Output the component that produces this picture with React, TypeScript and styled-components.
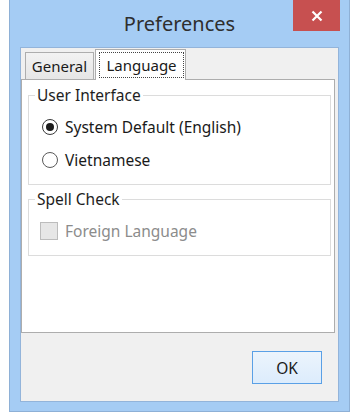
import styled, { createGlobalStyle } from 'styled-components';

const GlobalStyle = createGlobalStyle`
  html, body {
    margin: 0;
    padding: 0;
    background: #ffffff;
  }
  body {
    font-family: "Noto Sans", "Open Sans", sans-serif;
    color: #1a1a1a;
  }
`;

const Window = styled.div`
  box-sizing: border-box;
  margin-left: 9px;
  width: 341px;
  height: 412px;
  background: #a5ccf4;
  border: 1px solid #8eb0d6;
  border-top: none;
  display: flex;
  flex-direction: column;
  padding: 0 10px 9px 10px;
`;

const TitleBar = styled.div`
  height: 47px;
  margin: 0 -10px;
  display: grid;
  grid-template-columns: 1fr auto 1fr;
  align-items: start;
`;

const Title = styled.div`
  grid-column: 2;
  font-size: 20px;
  line-height: 26px;
  padding-top: 11px;
  color: #2e2e2e;
`;

const CloseButton = styled.div`
  grid-column: 3;
  justify-self: end;
  margin-right: 9px;
  width: 47px;
  height: 31px;
  background: #c75050;
  display: flex;
  align-items: center;
  justify-content: center;
`;

const Client = styled.div`
  box-sizing: border-box;
  height: 355px;
  border: 1px solid #93b4da;
  background: #f0f0f0;
  display: flex;
  flex-direction: column;
  padding: 1px 3px 0 0;
`;

const TabStrip = styled.div`
  height: 30px;
  display: flex;
  align-items: flex-end;
  gap: 1px;
  padding-left: 4px;
`;

const Tab = styled.div<{ $active?: boolean }>`
  box-sizing: border-box;
  display: flex;
  align-items: stretch;
  font-size: 15px;
  border: 1px solid #adadad;
  border-bottom: none;
  position: relative;
  z-index: ${(p) => (p.$active ? 1 : 0)};
  height: ${(p) => (p.$active ? '31px' : '27px')};
  margin-bottom: ${(p) => (p.$active ? '-1px' : '0')};
  width: ${(p) => (p.$active ? '91px' : '69px')};
  background: ${(p) =>
    p.$active ? '#ffffff' : 'linear-gradient(#f2f2f2, #e6e6e6)'};
  justify-content: center;
`;

const TabLabel = styled.span<{ $focused?: boolean }>`
  flex: 1;
  display: flex;
  align-items: center;
  justify-content: center;
  margin: ${(p) => (p.$focused ? '2px 1px 2px 3px' : '0')};
  border: ${(p) => (p.$focused ? '1px dotted #444' : 'none')};
`;

const Panel = styled.div`
  box-sizing: border-box;
  flex: 0 0 254px;
  background: #ffffff;
  border: 1px solid #adadad;
  padding: 0 3px 0 6px;
  display: flex;
  flex-direction: column;
`;

const Group = styled.fieldset<{ $gap: number }>`
  margin: ${(p) => p.$gap}px 0 0 0;
  padding: 14px 0 14px 13px;
  border: 1px solid #dcdcdc;
  display: flex;
  flex-direction: column;
  gap: 13px;
  min-width: 0;
`;

const Legend = styled.legend`
  margin-left: -7px;
  padding: 0 2px;
  font-size: 15.5px;
  line-height: 16px;
  color: #1e1e1e;
`;

const Option = styled.label<{ $disabled?: boolean }>`
  display: flex;
  align-items: center;
  gap: 7px;
  height: 20px;
  font-size: 15.5px;
  color: ${(p) => (p.$disabled ? '#8c8c8c' : '#1a1a1a')};
`;

const Radio = styled.span<{ $checked?: boolean }>`
  box-sizing: border-box;
  width: 16px;
  height: 16px;
  border-radius: 50%;
  border: 1px solid ${(p) => (p.$checked ? '#3a3a3a' : '#5a5a5a')};
  background: #ffffff;
  display: flex;
  align-items: center;
  justify-content: center;

  &::after {
    content: '';
    display: ${(p) => (p.$checked ? 'block' : 'none')};
    width: 8px;
    height: 8px;
    border-radius: 50%;
    background: #1b1b1b;
  }
`;

const CheckBox = styled.span`
  box-sizing: border-box;
  width: 18px;
  height: 18px;
  margin-left: -2px;
  border: 1px solid #bcbcbc;
  background: #e6e6e6;
`;

const Footer = styled.div`
  flex: 1;
  display: flex;
  justify-content: flex-end;
  align-items: flex-start;
  padding: 18px 13px 0 0;
`;

const Button = styled.button`
  box-sizing: border-box;
  width: 70px;
  height: 33px;
  border: 1px solid #5aa0e6;
  background: linear-gradient(#ecf4fc, #dcecfc);
  font-family: "Noto Sans", "Open Sans", sans-serif;
  font-size: 15.5px;
  color: #1a1a1a;
  padding: 0;
`;

const App = () => {
  return (
    <>
      <GlobalStyle />
      <Window>
        <TitleBar>
          <Title>Preferences</Title>
          <CloseButton>
            <svg width="12" height="12" viewBox="0 0 12 12">
              <path
                d="M1.5 1.5 L10.5 10.5 M10.5 1.5 L1.5 10.5"
                stroke="#ffffff"
                strokeWidth="2.2"
              />
            </svg>
          </CloseButton>
        </TitleBar>
        <Client>
          <TabStrip>
            <Tab>
              <TabLabel>General</TabLabel>
            </Tab>
            <Tab $active>
              <TabLabel $focused>Language</TabLabel>
            </Tab>
          </TabStrip>
          <Panel>
            <Group $gap={7}>
              <Legend>User Interface</Legend>
              <Option>
                <Radio $checked />
                System Default (English)
              </Option>
              <Option>
                <Radio />
                Vietnamese
              </Option>
            </Group>
            <Group $gap={6}>
              <Legend>Spell Check</Legend>
              <Option $disabled>
                <CheckBox />
                Foreign Language
              </Option>
            </Group>
          </Panel>
          <Footer>
            <Button>OK</Button>
          </Footer>
        </Client>
      </Window>
    </>
  );
};

export default App;
